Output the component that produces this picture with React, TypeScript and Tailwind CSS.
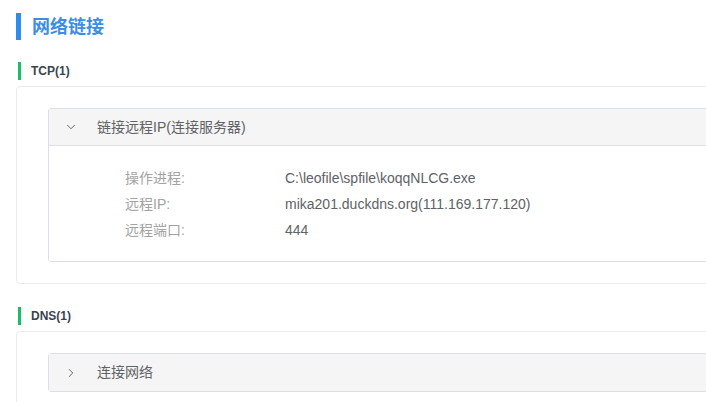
import { ChevronDown, ChevronRight } from 'lucide-react';

const FONT = { fontFamily: '"Liberation Sans", "Noto Sans CJK SC", Arial, sans-serif' };

const TCP_ROWS = [
  { label: '操作进程:', value: 'C:\\leofile\\spfile\\koqqNLCG.exe' },
  { label: '远程IP:', value: 'mika201.duckdns.org(111.169.177.120)' },
  { label: '远程端口:', value: '444' },
];

function SectionTitle({ text }: { text: string }) {
  return (
    <div className="flex h-[18px] items-center pl-[18px]">
      <span className="h-[18px] w-[3px] bg-[#19be6b]" />
      <span className="ml-[10px] text-[12px] leading-none font-bold text-[#3b4350]">{text}</span>
    </div>
  );
}

function Panel({
  title,
  open,
  rows,
}: {
  title: string;
  open: boolean;
  rows?: { label: string; value: string }[];
}) {
  return (
    <div className="rounded-[3px] border border-[#dcdfe6]">
      <div
        className={`flex h-[37px] items-center bg-[#f5f5f5] pl-[15px] ${open ? 'border-b border-[#dcdfe6]' : ''}`}
      >
        {open ? (
          <ChevronDown size={14} strokeWidth={1.7} className="text-[#666]" />
        ) : (
          <ChevronRight size={14} strokeWidth={1.7} className="text-[#666]" />
        )}
        <span className="ml-[19px] text-[14px] text-[#606266]">{title}</span>
      </div>
      {open && rows && (
        <div className="bg-white pt-[19px] pb-[18px] pl-[76px]">
          {rows.map((r) => (
            <div key={r.label} className="flex h-[26px] items-center text-[14px]">
              <span className="w-[160px] text-[#a3a3a3]">{r.label}</span>
              <span className="text-[#606266]">{r.value}</span>
            </div>
          ))}
        </div>
      )}
    </div>
  );
}

export default function App() {
  return (
    <div className="h-[402px] w-[706px] overflow-hidden bg-white" style={FONT}>
      <div className="w-[820px]">
        <div className="mt-[13px] flex h-[27px] items-center pl-4">
          <span className="h-[27px] w-[5px] bg-[#2d8cf0]" />
          <span className="ml-[11px] text-[18px] leading-none font-bold text-[#3a8ee6]">网络链接</span>
        </div>

        <div className="mt-[22px]">
          <SectionTitle text="TCP(1)" />
          <div className="mt-[6px] ml-4 rounded-[4px] border border-[#ebebeb] pt-[21px] pb-[21px] pl-[31px]">
            <Panel title="链接远程IP(连接服务器)" open rows={TCP_ROWS} />
          </div>
        </div>

        <div className="mt-[23px]">
          <SectionTitle text="DNS(1)" />
          <div className="mt-[6px] ml-4 rounded-[4px] border border-[#ebebeb] pt-[21px] pb-[21px] pl-[31px]">
            <Panel title="连接网络" open={false} />
          </div>
        </div>
      </div>
    </div>
  );
}
